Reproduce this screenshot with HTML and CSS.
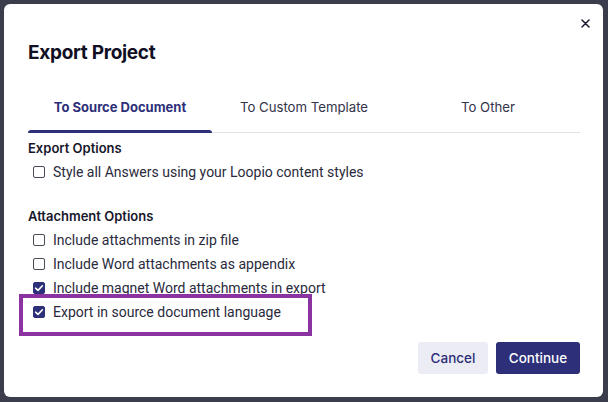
FILE: index.html
```html
<!DOCTYPE html>
<html lang="en">
<head>
    <meta charset="UTF-8">
    <meta name="viewport" content="width=device-width, initial-scale=1.0">
    <title>Export Project</title>
    <link rel="stylesheet" href="styles.css">
</head>
<body>
    <div class="modal">
        <button class="close-button" aria-label="Close">
            <svg width="9" height="9" viewBox="0 0 9 9">
                <path d="M1 1 L8 8 M8 1 L1 8" stroke="#1b1b2f" stroke-width="1.5" stroke-linecap="round"/>
            </svg>
        </button>

        <h1>Export Project</h1>

        <div class="tabs">
            <div class="tab active">To Source Document</div>
            <div class="tab">To Custom Template</div>
            <div class="tab">To Other</div>
        </div>

        <div class="section">
            <div class="section-title">Export Options</div>
            <label class="option"><span class="box"></span>Style all Answers using your Loopio content styles</label>
        </div>

        <div class="section attachments">
            <div class="section-title">Attachment Options</div>
            <label class="option"><span class="box"></span>Include attachments in zip file</label>
            <label class="option"><span class="box"></span>Include Word attachments as appendix</label>
            <label class="option"><span class="box checked"></span>Include magnet Word attachments in export</label>
            <label class="option highlighted"><span class="box checked"></span>Export in source document language</label>
        </div>

        <div class="footer">
            <button class="cancel">Cancel</button>
            <button class="continue">Continue</button>
        </div>
    </div>
</body>
</html>
```

FILE: styles.css
```css
* {
    box-sizing: border-box;
}

body {
    margin: 0;
    padding: 4px 5px 5px 4px;
    background-color: #3b3c4c;
    font-family: 'Inter', 'Roboto', sans-serif;
    height: 402px;
    overflow: hidden;
}

.modal {
    position: relative;
    width: 599px;
    height: 393px;
    background-color: #fff;
    border-radius: 6px;
    padding: 37px 23px 0 24px;
    display: flex;
    flex-direction: column;
}

.close-button {
    position: absolute;
    top: 10px;
    right: 9px;
    width: 18px;
    height: 18px;
    padding: 0;
    border: none;
    background: none;
    display: flex;
    align-items: center;
    justify-content: center;
    cursor: pointer;
}

h1 {
    margin: 0;
    font-size: 19px;
    line-height: 24px;
    font-weight: 700;
    letter-spacing: -0.3px;
    color: #101024;
}

.tabs {
    display: grid;
    grid-template-columns: 1fr 1fr 1fr;
    margin-top: 16px;
    border-bottom: 1px solid #e1e1ea;
}

.tab {
    position: relative;
    padding: 16px 0 15px;
    text-align: center;
    font-size: 13.2px;
    line-height: 20px;
    color: #33334a;
}

.tab.active {
    font-size: 13px;
    font-weight: 700;
    color: #2d2f78;
}

.tab.active::after {
    content: '';
    position: absolute;
    left: 0;
    right: 0;
    bottom: -1px;
    height: 3px;
    background-color: #2d2f78;
    border-radius: 3px 3px 0 0;
}

.section {
    margin-top: 3px;
}

.attachments {
    margin-top: 20px;
}

.section-title {
    font-size: 13px;
    line-height: 24px;
    font-weight: 600;
    color: #17172b;
}

.option {
    position: relative;
    display: flex;
    align-items: center;
    height: 24px;
    padding-left: 5px;
    font-family: 'Roboto', sans-serif;
    font-size: 14px;
    color: #2a2a3c;
}

.box {
    width: 12px;
    height: 12px;
    margin-right: 8px;
    border: 1.5px solid #4a4a58;
    border-radius: 2px;
    flex: 0 0 auto;
}

.box.checked {
    border-color: #2d2f78;
    background-color: #2d2f78;
    background-image: url("data:image/svg+xml,%3Csvg xmlns='http://www.w3.org/2000/svg' viewBox='0 0 12 12'%3E%3Cpath d='M2.6 6.2 L5 8.4 L9.4 3.8' fill='none' stroke='white' stroke-width='1.6' stroke-linecap='round' stroke-linejoin='round'/%3E%3C/svg%3E");
    background-size: 12px 12px;
    background-position: center;
}

/* 강조 박스 */
.highlighted::before {
    content: '';
    position: absolute;
    box-sizing: border-box;
    left: -9px;
    top: -6px;
    width: 293px;
    height: 42px;
    border: 4px solid #8b33a0;
}

.footer {
    display: flex;
    justify-content: flex-end;
    gap: 8px;
    margin-top: 18px;
}

.footer button {
    height: 32px;
    border: none;
    border-radius: 3px;
    font-family: 'Inter', sans-serif;
    font-size: 13.5px;
    font-weight: 500;
    cursor: pointer;
}

.cancel {
    width: 70px;
    background-color: #ececf5;
    color: #2d2f78;
}

.continue {
    width: 84px;
    background-color: #2d2f78;
    color: #fff;
    font-weight: 600;
}
```
